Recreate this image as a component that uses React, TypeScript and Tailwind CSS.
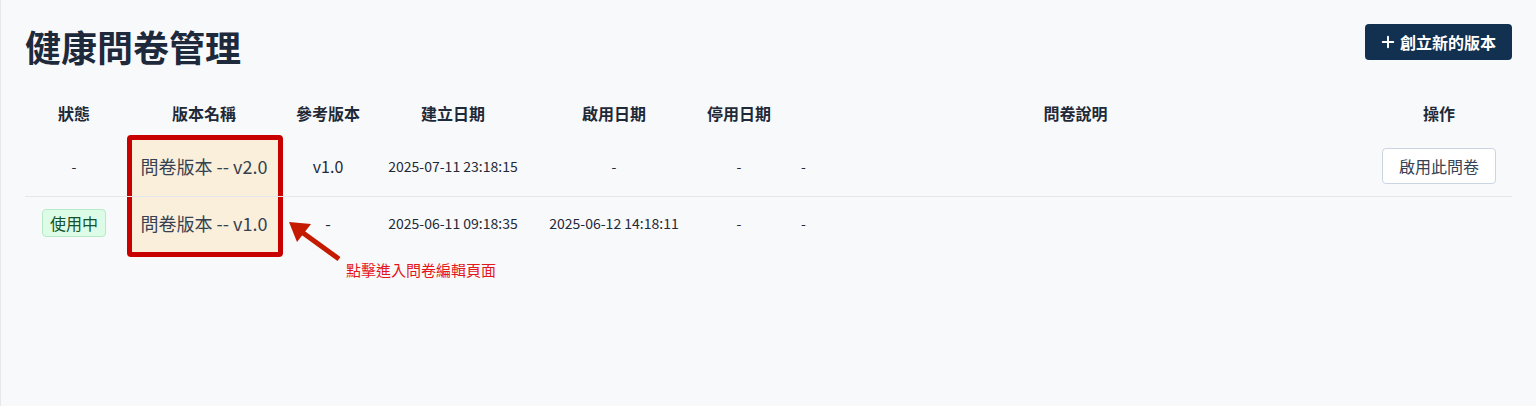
import { Plus } from "lucide-react"

const rows = [
  {
    status: null,
    name: "問卷版本 -- v2.0",
    ref: "v1.0",
    created: "2025-07-11 23:18:15",
    enabled: "-",
    disabled: "-",
    desc: "-",
    action: true,
  },
  {
    status: "使用中",
    name: "問卷版本 -- v1.0",
    ref: "-",
    created: "2025-06-11 09:18:35",
    enabled: "2025-06-12 14:18:11",
    disabled: "-",
    desc: "-",
    action: false,
  },
]

export default function App() {
  return (
    <div className="relative min-h-[406px] bg-[#f8f9fb] border-l border-[#e6e8ec] px-6 pt-6 font-['Noto_Sans_CJK_TC','Noto_Sans',sans-serif] text-[#1f2937]">
      {/* annotation highlight sits behind the table */}
      <div className="pointer-events-none absolute left-[126px] top-[135px] z-0 h-[122px] w-[156px] rounded-[4px] border-[5px] border-[#c80000] bg-[#f9efdb]" />

      <div className="flex items-start justify-between">
        <h1 className="text-[36px] font-bold leading-[44px] text-[#1e293b]">健康問卷管理</h1>
        <button className="flex h-9 items-center gap-[3px] rounded bg-[#12304f] pl-[14px] pr-4 text-[16px] font-bold text-white">
          <Plus size={18} strokeWidth={2.6} />
          <span>創立新的版本</span>
        </button>
      </div>

      <table className="relative z-10 mt-[22px] w-full table-fixed border-collapse">
        <colgroup>
          <col className="w-[98px]" />
          <col className="w-[162px]" />
          <col className="w-[86px]" />
          <col className="w-[164px]" />
          <col className="w-[158px]" />
          <col className="w-[92px]" />
          <col />
          <col className="w-[146px]" />
        </colgroup>
        <thead>
          <tr className="h-[46px] text-[16px] text-[#1f2937]">
            <th className="font-bold">狀態</th>
            <th className="font-bold">版本名稱</th>
            <th className="font-bold">參考版本</th>
            <th className="font-bold">建立日期</th>
            <th className="font-bold">啟用日期</th>
            <th className="font-bold">停用日期</th>
            <th className="font-bold">問卷說明</th>
            <th className="font-bold">操作</th>
          </tr>
        </thead>
        <tbody>
          {rows.map((r, i) => (
            <tr key={i} className={i === 0 ? "border-b border-[#e5e7eb]" : ""}>
              <td className="py-3 text-center text-[14px]">
                {r.status ? (
                  <span className="inline-block rounded border border-[#b7ebc6] bg-[#dcfce7] px-[7px] py-[1px] text-[16px] leading-[24px] text-[#14532d]">
                    {r.status}
                  </span>
                ) : (
                  "-"
                )}
              </td>
              <td className="py-3 text-center text-[18px] leading-[24px] text-[#374151]">{r.name}</td>
              <td className="py-3 text-center text-[16px]">{r.ref}</td>
              <td className="py-3 text-center text-[14px]">{r.created}</td>
              <td className="py-3 text-center text-[14px]">{r.enabled}</td>
              <td className="py-3 text-center text-[14px]">{r.disabled}</td>
              <td className="py-3 pl-4 text-left text-[14px]">{r.desc}</td>
              <td className="py-3 text-center">
                {r.action && (
                  <button className="h-9 rounded border border-[#cbd5e1] bg-white px-4 text-[16px] text-[#374151]">
                    啟用此問卷
                  </button>
                )}
              </td>
            </tr>
          ))}
        </tbody>
      </table>

      <svg className="pointer-events-none absolute left-[280px] top-[212px] z-20" width="70" height="54" viewBox="0 0 70 54">
        <line x1="58" y1="47" x2="18" y2="18" stroke="#c41a00" strokeWidth="5" />
        <polygon points="8,10 30,12 16,30" fill="#c41a00" />
      </svg>
      <p className="absolute left-[345px] top-[259px] z-20 text-[15px] leading-[22px] text-[#e5161b]">點擊進入問卷編輯頁面</p>
    </div>
  )
}
